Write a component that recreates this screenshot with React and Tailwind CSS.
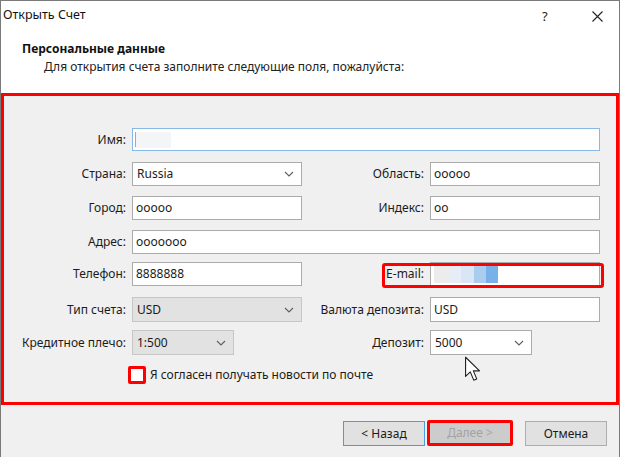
import React from "react";

const Chevron = () => (
  <svg width="10" height="6" viewBox="0 0 10 6" className="shrink-0">
    <polyline points="1,1 5,5 9,1" fill="none" stroke="#5f5f5f" strokeWidth="1.1" />
  </svg>
);

const Label = ({ children, w = "w-[122px]" }) => (
  <div className={`${w} shrink-0 text-right pr-[0px] text-[#1b1b1b] leading-none`}>{children}</div>
);

const Input = ({ value, w = "w-[170px]", children }) => (
  <div
    className={`${w} h-full ml-[6px] shrink-0 bg-white border border-[#ababab] flex items-center pl-[3px] text-[#1b1b1b] relative`}
  >
    {value}
    {children}
  </div>
);

const Combo = ({ value, w = "w-[170px]", disabled }) => (
  <div
    className={`${w} h-full ml-[6px] shrink-0 border flex items-center justify-between pl-[4px] pr-[7px] text-[#1b1b1b] ${
      disabled ? "bg-[#e2e2e2] border-[#c6c6c6]" : "bg-white border-[#ababab]"
    }`}
  >
    <span>{value}</span>
    <Chevron />
  </div>
);

export default function App() {
  return (
    <div
      className="w-[620px] h-[457px] bg-[#f0f0f0] flex flex-col overflow-hidden relative border-t border-x border-[#7a7a7a] text-[12px] text-[#1b1b1b]"
      style={{ fontFamily: "'Noto Sans', 'Open Sans', sans-serif" }}
    >
      {/* title bar */}
      <div className="h-[29px] bg-white flex items-center shrink-0 relative">
        <span className="pl-[2px] text-[12.5px] text-[#111]">Открыть Счет</span>
        <span className="absolute left-[541px] top-[6px] text-[13px] text-[#222]">?</span>
        <svg className="absolute left-[591px] top-[10px]" width="11" height="11" viewBox="0 0 11 11">
          <path d="M0.5 0.5 L10.5 10.5 M10.5 0.5 L0.5 10.5" stroke="#222" strokeWidth="1.1" />
        </svg>
      </div>
      {/* header */}
      <div className="h-[63px] bg-white shrink-0 flex flex-col">
        <div className="pl-[21px] mt-[11px] font-bold text-[12px] leading-[16px] text-[#111]">Персональные данные</div>
        <div className="pl-[43px] mt-[2px] leading-[16px] text-[#222]">
          Для открытия счета заполните следующие поля, пожалуйста:
        </div>
      </div>
      {/* red annotated body */}
      <div className="h-[312px] border-[3px] border-[#ff0000] shrink-0 flex flex-col">
        <div className="flex items-center h-[23px] mt-[32px]">
          <Label>Имя:</Label>
          <div className="w-[468px] h-full ml-[6px] bg-white border border-[#86b8e8] flex items-center pl-[2px] relative">
            <div className="w-[36px] h-[16px] bg-[#f4f5f7] flex items-center">
              <div className="w-[1px] h-[15px] bg-[#8aaed4]" />
            </div>
          </div>
        </div>
        <div className="flex items-center h-[24px] mt-[11px]">
          <Label>Страна:</Label>
          <Combo value="Russia" />
          <Label>Область:</Label>
          <Input value="ooooo" />
        </div>
        <div className="flex items-center h-[24px] mt-[10px]">
          <Label>Город:</Label>
          <Input value="ooooo" />
          <Label>Индекс:</Label>
          <Input value="oo" />
        </div>
        <div className="flex items-center h-[24px] mt-[10px]">
          <Label>Адрес:</Label>
          <Input value="ooooooo" w="w-[468px]" />
        </div>
        <div className="flex items-center h-[24px] mt-[8px]">
          <Label>Телефон:</Label>
          <Input value="8888888" />
          <Label>E-mail:</Label>
          <Input>
            <div className="flex h-[17px]">
              <div className="w-[15px] bg-[#ececec]" />
              <div className="w-[12px] bg-[#e6edf6]" />
              <div className="w-[13px] bg-[#d8e6f5]" />
              <div className="w-[12px] bg-[#a9ccef]" />
              <div className="w-[12px] bg-[#77b1e8]" />
            </div>
          </Input>
        </div>
        <div className="flex items-center h-[25px] mt-[11px]">
          <Label>Тип счета:</Label>
          <Combo value="USD" disabled />
          <Label>Валюта депозита:</Label>
          <Input value="USD" />
        </div>
        <div className="flex items-center h-[25px] mt-[8px]">
          <Label>Кредитное плечо:</Label>
          <Combo value="1:500" w="w-[102px]" disabled />
          <Label w="w-[190px]">Депозит:</Label>
          <Combo value="5000" w="w-[102px]" />
        </div>
        <div className="flex items-center h-[18px] mt-[11px]">
          <div className="ml-[124px] w-[18px] h-[18px] border-[3px] border-[#ff0000] rounded-[2px] bg-white shrink-0" />
          <span className="ml-[4px] text-[#1b1b1b]">Я согласен получать новости по почте</span>
        </div>
      </div>
      {/* buttons */}
      <div className="flex-1 flex justify-end items-start pt-[16px] pr-[12px]">
        <div className="w-[82px] h-[25px] border border-[#4d9ae0] bg-[#e1e1e1] flex items-center justify-center">
          &lt; Назад
        </div>
        <div className="w-[86px] h-[26px] -mt-[1px] ml-[2px] border-[3px] border-[#ff0000] rounded-[2px] bg-[#cccccc] text-[#a3a3a3] flex items-center justify-center">
          Далее &gt;
        </div>
        <div className="w-[82px] h-[25px] ml-[12px] border border-[#adadad] bg-[#e1e1e1] flex items-center justify-center">
          Отмена
        </div>
      </div>
      {/* overlays */}
      <div className="absolute left-[381px] top-[262px] w-[222px] h-[25px] border-[3px] border-[#ff0000] rounded-[3px] pointer-events-none" />
      <svg className="absolute left-[463px] top-[355px]" width="18" height="26" viewBox="0 0 14 21">
        <path d="M1 1 L1 16.5 L4.8 12.8 L7.6 19.5 L10 18.5 L7.3 12 L12.3 12 Z" fill="#fff" stroke="#222" strokeWidth="0.9" strokeLinejoin="round" />
      </svg>
    </div>
  );
}
